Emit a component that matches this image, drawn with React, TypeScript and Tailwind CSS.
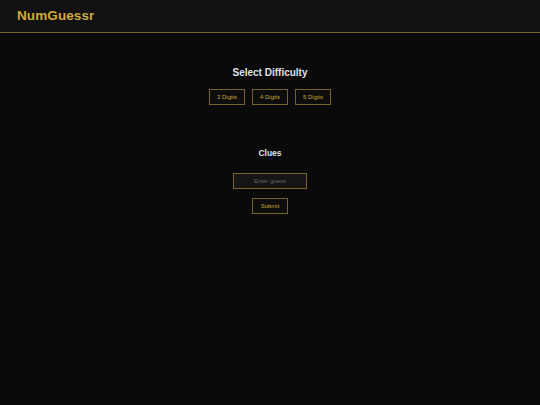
import React from 'react';

const BTN = 'border border-[#75622c] bg-[#0d0d0d] text-[#c9a63a] text-[6px] leading-none flex items-center justify-center';

export default function App() {
  return (
    <div className="min-h-[405px] bg-[#0a0a0a] font-['Liberation_Sans',Arial,sans-serif]">
      <header className="h-[33px] bg-[#111111] border-b border-[#75622c] flex items-center px-[17px]">
        <h1 className="text-[13.5px] font-bold text-[#cfa93a] tracking-[0.1px]">NumGuessr</h1>
      </header>

      <main className="flex flex-col items-center">
        <h2 className="mt-[34px] text-[10px] leading-[12px] font-bold text-[#e0e0e0]">Select Difficulty</h2>
        <div className="mt-[10px] flex gap-[6.5px]">
          {['3 Digits', '4 Digits', '5 Digits'].map(d => (
            <button key={d} className={BTN + ' w-[36.5px] h-[16px]'}>{d}</button>
          ))}
        </div>

        <h3 className="mt-[43px] text-[8.5px] leading-[10px] font-bold text-[#e0e0e0]">Clues</h3>
        <input
          placeholder="Enter guess"
          className="mt-[15px] w-[74px] h-[16px] border border-[#75622c] bg-[#161616] text-center text-[6px] text-[#777] placeholder:text-[#666] outline-none"
        />
        <button className={BTN + ' mt-[9px] w-[36px] h-[16px]'}>Submit</button>
      </main>
    </div>
  );
}
